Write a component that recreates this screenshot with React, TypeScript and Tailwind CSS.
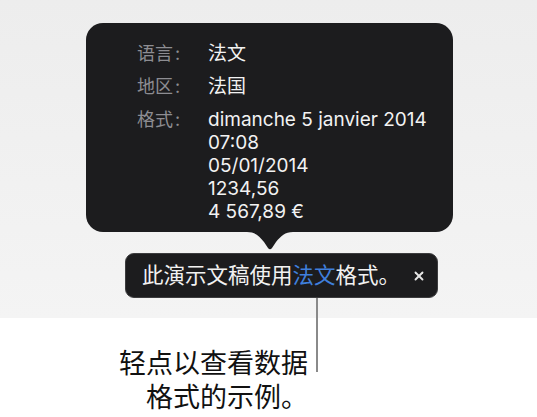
import { X } from "lucide-react";

const cjk = "font-['Inter','Noto_Sans_CJK_SC',sans-serif]";

const rows = [
  { label: "语言", values: ["法文"] },
  { label: "地区", values: ["法国"] },
  {
    label: "格式",
    values: ["dimanche 5 janvier 2014", "07:08", "05/01/2014", "1234,56", "4 567,89 €"],
  },
];

export default function App() {
  return (
    <main className={`relative w-[537px] h-[417px] overflow-hidden bg-white ${cjk}`}>
      <section className="h-[318px] bg-gradient-to-b from-[#ededed] to-[#f4f4f4] pt-[23px]">
        {/* popover */}
        <div className="ml-[86px] w-[367px] h-[209px] rounded-[17px] bg-[#1c1c1e] pl-[51px] pt-[19px]">
          <div className="flex flex-col gap-[10px]">
            {rows.map((r) => (
              <div key={r.label} className="flex text-[19px] leading-[23px]">
                <div className="w-[71px] flex text-[#8d8d92] text-[18px]">
                  <span>{r.label}</span>
                  <span className="ml-[2px]">:</span>
                </div>
                <div className="flex flex-col text-[#f2f2f2]">
                  {r.values.map((v) => (
                    <span key={v}>{v}</span>
                  ))}
                </div>
              </div>
            ))}
          </div>
        </div>
        <svg className="ml-[247px] block" width="46" height="18" viewBox="0 0 46 18">
          <path d="M0 0 H46 C38 0 34 4 29 10 L25 16 Q23 18.5 21 16 L17 10 C12 4 8 0 0 0 Z" fill="#1c1c1e" />
        </svg>

        {/* banner */}
        <div className="ml-[125px] mt-[3px] w-[313px] h-[45px] rounded-[9px] bg-[#1c1c1e] border border-[#3c3c3e] flex items-center pl-[16px]">
          <span className="text-[21.5px] leading-none text-[#f2f2f2]">
            此演示文稿使用<span className="text-[#3f7fdc]">法文</span>格式。
          </span>
          <X className="ml-[12px] text-[#e6e6e6]" size={14} strokeWidth={3.2} />
        </div>
      </section>

      <div className="absolute left-[316px] top-[298px] w-[2px] h-[74px] bg-[#8a8a8a]" />

      <p className="w-[308px] pt-[29px] text-right text-[27px] leading-[34px] text-[#111]">
        轻点以查看数据
        <br />
        格式的示例。
      </p>
    </main>
  );
}
